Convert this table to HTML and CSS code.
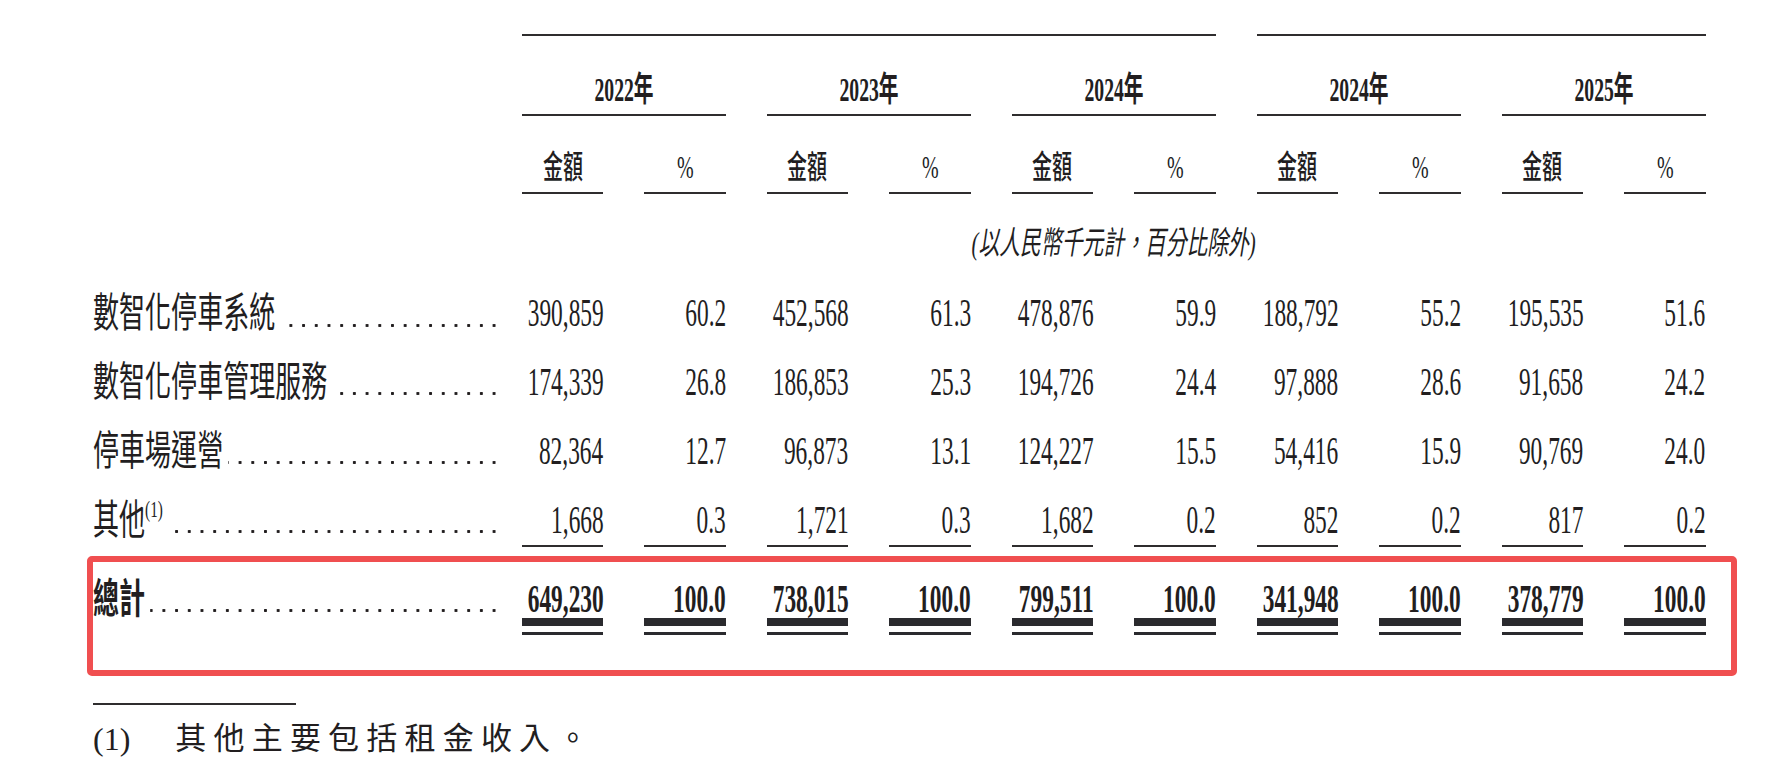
FILE: index.html
```html
<!DOCTYPE html>
<html lang="zh-Hant">
<head>
<meta charset="utf-8">
<title>收入明細</title>
<link rel="stylesheet" href="styles.css">
</head>
<body>
<div class="page">
  <div class="table">
    <div class="row r-top">
      <div class="label"></div>
      <div class="topline wide"></div>
      <div class="topline narrow"></div>
    </div>
    <div class="row r-year">
      <div class="label"></div>
      <div class="year"><span class="sq">2022年</span></div>
      <div class="year"><span class="sq">2023年</span></div>
      <div class="year"><span class="sq">2024年</span></div>
      <div class="year"><span class="sq">2024年</span></div>
      <div class="year"><span class="sq">2025年</span></div>
    </div>
    <div class="row r-sub">
      <div class="label"></div>
      <div class="sub"><span class="sq">金額</span></div>
      <div class="sub"><span class="sq">%</span></div>
      <div class="sub"><span class="sq">金額</span></div>
      <div class="sub"><span class="sq">%</span></div>
      <div class="sub"><span class="sq">金額</span></div>
      <div class="sub"><span class="sq">%</span></div>
      <div class="sub"><span class="sq">金額</span></div>
      <div class="sub"><span class="sq">%</span></div>
      <div class="sub"><span class="sq">金額</span></div>
      <div class="sub"><span class="sq">%</span></div>
    </div>
    <div class="row r-cap">
      <div class="label"></div>
      <div class="cap"><span class="sq">(以人民幣千元計，百分比除外)</span></div>
    </div>

    <div class="row r-data">
      <div class="label"><div class="lab-in"><span class="lab-t">數智化停車系統</span><span class="leader"></span></div></div>
      <div class="num"><span class="sq">390,859</span></div>
      <div class="num"><span class="sq">60.2</span></div>
      <div class="num"><span class="sq">452,568</span></div>
      <div class="num"><span class="sq">61.3</span></div>
      <div class="num"><span class="sq">478,876</span></div>
      <div class="num"><span class="sq">59.9</span></div>
      <div class="num"><span class="sq">188,792</span></div>
      <div class="num"><span class="sq">55.2</span></div>
      <div class="num"><span class="sq">195,535</span></div>
      <div class="num"><span class="sq">51.6</span></div>
    </div>
    <div class="row r-data">
      <div class="label"><div class="lab-in"><span class="lab-t">數智化停車管理服務</span><span class="leader"></span></div></div>
      <div class="num"><span class="sq">174,339</span></div>
      <div class="num"><span class="sq">26.8</span></div>
      <div class="num"><span class="sq">186,853</span></div>
      <div class="num"><span class="sq">25.3</span></div>
      <div class="num"><span class="sq">194,726</span></div>
      <div class="num"><span class="sq">24.4</span></div>
      <div class="num"><span class="sq">97,888</span></div>
      <div class="num"><span class="sq">28.6</span></div>
      <div class="num"><span class="sq">91,658</span></div>
      <div class="num"><span class="sq">24.2</span></div>
    </div>
    <div class="row r-data">
      <div class="label"><div class="lab-in"><span class="lab-t">停車場運營</span><span class="leader"></span></div></div>
      <div class="num"><span class="sq">82,364</span></div>
      <div class="num"><span class="sq">12.7</span></div>
      <div class="num"><span class="sq">96,873</span></div>
      <div class="num"><span class="sq">13.1</span></div>
      <div class="num"><span class="sq">124,227</span></div>
      <div class="num"><span class="sq">15.5</span></div>
      <div class="num"><span class="sq">54,416</span></div>
      <div class="num"><span class="sq">15.9</span></div>
      <div class="num"><span class="sq">90,769</span></div>
      <div class="num"><span class="sq">24.0</span></div>
    </div>
    <div class="row r-data r-last">
      <div class="label"><div class="lab-in"><span class="lab-t">其他<sup class="fnref">(1)</sup></span><span class="leader"></span></div></div>
      <div class="num"><span class="sq">1,668</span></div>
      <div class="num"><span class="sq">0.3</span></div>
      <div class="num"><span class="sq">1,721</span></div>
      <div class="num"><span class="sq">0.3</span></div>
      <div class="num"><span class="sq">1,682</span></div>
      <div class="num"><span class="sq">0.2</span></div>
      <div class="num"><span class="sq">852</span></div>
      <div class="num"><span class="sq">0.2</span></div>
      <div class="num"><span class="sq">817</span></div>
      <div class="num"><span class="sq">0.2</span></div>
    </div>
    <div class="row r-total">
      <div class="label"><div class="lab-in"><span class="lab-t">總計</span><span class="leader"></span></div></div>
      <div class="tnum"><div class="bar"><span class="sq">649,230</span></div></div>
      <div class="tnum"><div class="bar"><span class="sq">100.0</span></div></div>
      <div class="tnum"><div class="bar"><span class="sq">738,015</span></div></div>
      <div class="tnum"><div class="bar"><span class="sq">100.0</span></div></div>
      <div class="tnum"><div class="bar"><span class="sq">799,511</span></div></div>
      <div class="tnum"><div class="bar"><span class="sq">100.0</span></div></div>
      <div class="tnum"><div class="bar"><span class="sq">341,948</span></div></div>
      <div class="tnum"><div class="bar"><span class="sq">100.0</span></div></div>
      <div class="tnum"><div class="bar"><span class="sq">378,779</span></div></div>
      <div class="tnum"><div class="bar"><span class="sq">100.0</span></div></div>
    </div>
  </div>

  <div class="fn-rule"></div>
  <p class="fn"><span class="fn-no">(1)</span><span class="fn-t">其他主要包括租金收入。</span></p>

  <div class="highlight"></div>
</div>
</body>
</html>
```

FILE: styles.css
```css
* { box-sizing: border-box; }

html, body {
  margin: 0;
  background: #ffffff;
}

body {
  font-family: "Liberation Serif", "Noto Sans CJK TC", serif;
  color: #221e1f;
}

.page {
  position: relative;
  padding: 34px 0 0 93px;
  height: 768px;
  overflow: hidden;
}

.row {
  display: grid;
  grid-template-columns: 387.9px repeat(10, 81.7px);
  column-gap: 40.8px;
}

.sq {
  display: inline-block;
  white-space: nowrap;
}

/* top rules */
.r-top { height: 2px; }
.topline { border-top: 2px solid #2f2d2e; }
.topline.wide { grid-column: span 6; }
.topline.narrow { grid-column: span 4; }

/* year headings */
.year {
  grid-column: span 2;
  height: 79.5px;
  padding-top: 37px;
  line-height: 34px;
  font-size: 34px;
  font-weight: 700;
  border-bottom: 2px solid #2f2d2e;
  display: flex;
  justify-content: center;
}
.year .sq { transform: scaleX(.58); }

/* 金額 / % */
.sub {
  height: 78.8px;
  padding-top: 35.5px;
  line-height: 32px;
  font-size: 32px;
  font-weight: 500;
  border-bottom: 2px solid #2f2d2e;
  display: flex;
  justify-content: center;
}
.sub .sq { transform: scaleX(.625); }

/* caption */
.cap {
  grid-column: span 10;
  height: 83.35px;
  padding-top: 32.7px;
  line-height: 32px;
  font-size: 32px;
  font-style: italic;
  display: flex;
  justify-content: center;
}
.cap .sq { transform: scaleX(.65); }

/* labels with dot leaders */
.label { min-width: 0; }

.lab-in {
  width: 641.6px;
  display: flex;
  transform: scaleX(.635);
  transform-origin: 0 50%;
  font-size: 41px;
  line-height: 40px;
}

.lab-t {
  white-space: nowrap;
  padding-right: 8px;
}

.fnref {
  font-size: 24px;
  line-height: 0;
  vertical-align: 17px;
}

.leader {
  flex: 1;
  background-image: radial-gradient(2.9px 1.85px at 50% 50%, #221e1f 72%, rgba(34, 30, 31, 0) 100%);
  background-size: 20px 5px;
  background-repeat: repeat-x;
  background-position: right 0 top 29.3px;
}

/* data rows */
.r-data {
  height: 68.7px;
  padding-top: 15.85px;
}

.num {
  display: flex;
  justify-content: flex-end;
  font-size: 39px;
  line-height: 40px;
}
.num .sq,
.tnum .sq {
  transform: scaleX(.6);
  transform-origin: 100% 50%;
}

.r-last { height: 63px; }
.r-last .num {
  height: 47.15px;
  border-bottom: 2px solid #2f2d2e;
}

/* total row */
.r-total {
  padding-top: 33.25px;
  font-weight: 700;
}
.r-total .lab-in { line-height: 38px; }
.r-total .leader {
  background-position: right 0 top 28.3px;
}

.tnum {
  padding-bottom: 6px;
  border-bottom: 3px solid #2a2a2e;
  font-size: 39px;
}
.bar {
  display: flex;
  justify-content: flex-end;
  line-height: 38px;
  border-bottom: 8px solid #2a2a2e;
}

/* footnote */
.fn-rule {
  width: 203.4px;
  height: 2px;
  margin-top: 68.3px;
  background: #2f2d2e;
}

.fn {
  margin: 15.5px 0 0;
  display: flex;
  font-size: 31px;
  line-height: 36px;
}
.fn-no { font-size: 32px; }
.fn-t {
  margin-left: 45px;
  letter-spacing: 7.2px;
  font-weight: 400;
}

/* annotation overlay */
.highlight {
  position: absolute;
  left: 87px;
  top: 556px;
  width: 1650px;
  height: 120px;
  border: 6.5px solid #f04f50;
  border-radius: 5px;
}
```
